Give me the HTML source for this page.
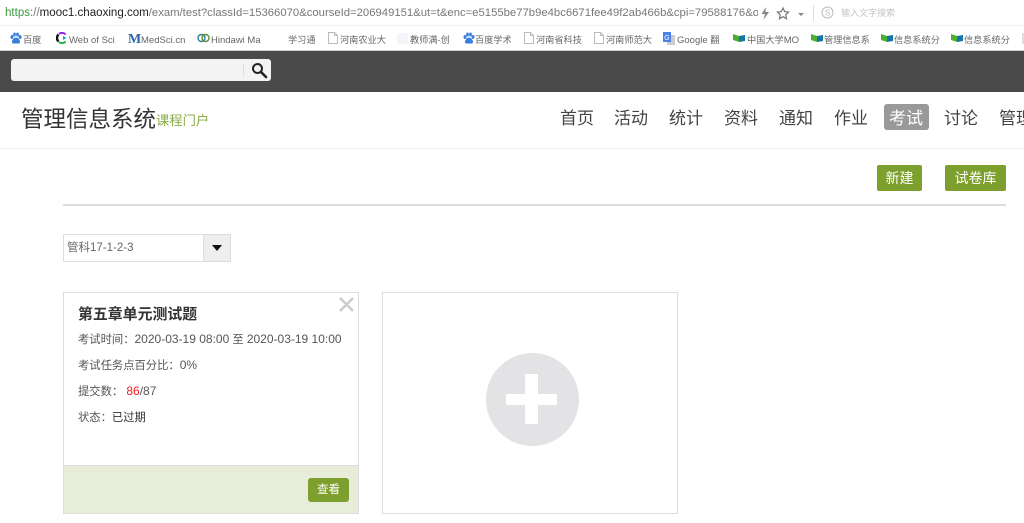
<!DOCTYPE html>
<html lang="zh-CN">
<head>
<meta charset="utf-8">
<title>管理信息系统</title>
<style>
html,body{margin:0;padding:0;width:1024px;height:523px;overflow:hidden;background:#fff;}
body{position:relative;font-family:"Liberation Sans","Noto Sans CJK SC",sans-serif;color:#333;}
.a{position:absolute;white-space:nowrap;}
.bm{position:absolute;top:32px;font-size:9.2px;line-height:16px;color:#666;white-space:nowrap;}
.bm b{font-weight:normal;font-size:9.5px;}
.ic{position:absolute;top:32px;}
.nav{position:absolute;top:107px;font-size:17px;line-height:24px;color:#444;white-space:nowrap;}
.row{position:absolute;left:78px;font-size:11.3px;line-height:16px;color:#555;white-space:nowrap;}
.row b{font-weight:normal;font-size:12px;}
.soft{filter:blur(.35px);}
</style>
</head>
<body>
<!-- address bar -->
<div class="a soft" style="left:5px;top:5px;font-size:11.55px;line-height:16px;color:#777;width:753px;overflow:hidden;"><span style="color:#3a9a3a">https</span>://<span style="color:#222">mooc1.chaoxing.com</span><span style="font-size:11.3px">/exam/test?classId=15366070&amp;courseId=206949151&amp;ut=t&amp;enc=e5155be77b9e4bc6671fee49f2ab466b&amp;cpi=79588176&amp;o</span></div>
<svg class="a" style="left:760px;top:6px" width="50" height="15" viewBox="0 0 50 15">
<path d="M6 1L1.5 8H5L3.5 14L9 6H5.5Z" fill="#888"/>
<path d="M23 2l1.7 3.6 3.9.5-2.9 2.7.8 3.900-3.500-2-3.500 2 .8-3.900-2.900-2.700 3.900-.5z" fill="none" stroke="#777" stroke-width="1.2"/>
<path d="M38 7h6l-3 3z" fill="#888"/>
</svg>
<div class="a" style="left:813px;top:5px;width:1px;height:16px;background:#ddd"></div>
<svg class="a" style="left:821px;top:6px" width="13" height="13" viewBox="0 0 13 13"><circle cx="6.5" cy="6.5" r="5.5" fill="none" stroke="#bbb"/><text x="6.5" y="9.5" font-size="8" text-anchor="middle" fill="#bbb" font-family="Liberation Sans">S</text></svg>
<div class="a soft" style="left:841px;top:6px;font-size:9px;line-height:14px;color:#c4c4c4">输入文字搜索</div>
<div class="a" style="left:0;top:25px;width:1024px;height:1px;background:#f0f0f0"></div>

<!-- bookmarks -->
<svg class="ic" style="left:10px" width="12" height="13" viewBox="0 0 12 13"><g fill="#3a7fe0"><ellipse cx="2" cy="5" rx="1.5" ry="2"/><ellipse cx="4.5" cy="2.5" rx="1.4" ry="2"/><ellipse cx="7.5" cy="2.5" rx="1.4" ry="2"/><ellipse cx="10" cy="5" rx="1.5" ry="2"/><path d="M6 5.500c2 0 4.500 3 4 5-.5 1.500-3 1-4 1s-3.500.5-4-1c-.5-2 2-5 4-5z"/></g></svg>
<div class="bm soft" style="left:23px">百度</div>
<svg class="ic" style="left:56px;top:32px" width="12" height="12" viewBox="0 0 12 12"><path d="M9.500 2.500A4.500 4.500 0 0 0 3 2" fill="none" stroke="#8a2be2" stroke-width="2"/><path d="M2.500 2.500A4.800 4.800 0 0 0 2.500 9.500" fill="none" stroke="#111" stroke-width="2.400"/><path d="M3 10A4.500 4.500 0 0 0 9.500 9.500" fill="none" stroke="#22b14c" stroke-width="2"/><path d="M7 4l3.500 2-3.500 2z" fill="#00a0e0"/></svg>
<div class="bm soft" style="left:69px"><b>Web of Sci</b></div>
<div class="a soft" style="left:128px;top:31px;font:bold 14px/17px 'Liberation Serif',serif;color:#2a63ad">M</div>
<div class="bm soft" style="left:141px"><b>MedSci.cn</b></div>
<svg class="ic" style="left:197px;top:33px" width="13" height="10" viewBox="0 0 13 10"><circle cx="4.500" cy="5" r="3.500" fill="none" stroke="#2f7f9f" stroke-width="1.400"/><circle cx="8.500" cy="5" r="3.500" fill="none" stroke="#5f8f2f" stroke-width="1.400"/></svg>
<div class="bm soft" style="left:211px"><b>Hindawi Ma</b></div>
<div class="bm soft" style="left:288px">学习通</div>
<svg class="ic" style="left:328px" width="10" height="12" viewBox="0 0 10 12"><path d="M.5.500h6l3 3v8h-9zM6.500.500v3h3" fill="#fff" stroke="#bbb"/></svg>
<div class="bm soft" style="left:340px">河南农业大</div>
<div class="a" style="left:397px;top:33px;width:11px;height:11px;background:#f3f5fa"></div>
<div class="bm soft" style="left:410px">教师满-创</div>
<svg class="ic" style="left:463px" width="12" height="13" viewBox="0 0 12 13"><g fill="#3a7fe0"><ellipse cx="2" cy="5" rx="1.500" ry="2"/><ellipse cx="4.500" cy="2.500" rx="1.400" ry="2"/><ellipse cx="7.500" cy="2.500" rx="1.400" ry="2"/><ellipse cx="10" cy="5" rx="1.500" ry="2"/><path d="M6 5.500c2 0 4.500 3 4 5-.5 1.500-3 1-4 1s-3.500.5-4-1c-.5-2 2-5 4-5z"/></g></svg>
<div class="bm soft" style="left:475px">百度学术</div>
<svg class="ic" style="left:524px" width="10" height="12" viewBox="0 0 10 12"><path d="M.5.500h6l3 3v8h-9zM6.500.500v3h3" fill="#fff" stroke="#bbb"/></svg>
<div class="bm soft" style="left:536px">河南省科技</div>
<svg class="ic" style="left:594px" width="10" height="12" viewBox="0 0 10 12"><path d="M.5.500h6l3 3v8h-9zM6.500.500v3h3" fill="#fff" stroke="#bbb"/></svg>
<div class="bm soft" style="left:606px">河南师范大</div>
<svg class="ic" style="left:663px" width="12" height="13" viewBox="0 0 12 13"><rect x="4" y="3" width="8" height="10" fill="#ccc"/><rect width="8" height="10" fill="#4a80e8"/><text x="4" y="8" font-size="7" fill="#fff" text-anchor="middle" font-family="Liberation Sans">G</text></svg>
<div class="bm soft" style="left:677px"><b>Google</b> 翻</div>
<svg class="ic" style="left:733px;top:34px" width="12" height="9" viewBox="0 0 12 9"><path d="M0 0l6 2v6L0 6z" fill="#4caf30"/><path d="M12 1L6 2v6l6-1z" fill="#1476a8"/></svg>
<div class="bm soft" style="left:747px">中国大学<b>MO</b></div>
<svg class="ic" style="left:811px;top:34px" width="12" height="9" viewBox="0 0 12 9"><path d="M0 0l6 2v6L0 6z" fill="#4caf30"/><path d="M12 1L6 2v6l6-1z" fill="#1476a8"/></svg>
<div class="bm soft" style="left:824px">管理信息系</div>
<svg class="ic" style="left:881px;top:34px" width="12" height="9" viewBox="0 0 12 9"><path d="M0 0l6 2v6L0 6z" fill="#4caf30"/><path d="M12 1L6 2v6l6-1z" fill="#1476a8"/></svg>
<div class="bm soft" style="left:894px">信息系统分</div>
<svg class="ic" style="left:951px;top:34px" width="12" height="9" viewBox="0 0 12 9"><path d="M0 0l6 2v6L0 6z" fill="#4caf30"/><path d="M12 1L6 2v6l6-1z" fill="#1476a8"/></svg>
<div class="bm soft" style="left:964px">信息系统分</div>
<div class="a" style="left:1022px;top:33px;width:2px;height:11px;background:#ddd"></div>

<!-- dark bar -->
<div class="a" style="left:0;top:50px;width:1024px;height:1px;background:#ccc"></div>
<div class="a" style="left:0;top:51px;width:1024px;height:41px;background:#4a4a4a"></div>
<div class="a" style="left:11px;top:59px;width:260px;height:22px;background:#f3f3f3;border-radius:3px"></div>
<div class="a" style="left:243px;top:64px;width:1px;height:12px;background:#ddd"></div>
<svg class="a" style="left:251px;top:61px" width="18" height="18" viewBox="0 0 18 18"><circle cx="6.500" cy="7.500" r="4.500" fill="none" stroke="#222" stroke-width="2"/><path d="M10 11l5 5" stroke="#222" stroke-width="2.600" stroke-linecap="round"/></svg>

<!-- course header -->
<div class="a soft" style="left:21px;top:105px;font-size:22.500px;line-height:30px;color:#333">管理信息系统</div>
<div class="a soft" style="left:156px;top:111px;font-size:13.300px;line-height:20px;color:#8aab4a">课程门户</div>
<div class="nav soft" style="left:560px">首页</div>
<div class="nav soft" style="left:614px">活动</div>
<div class="nav soft" style="left:669px">统计</div>
<div class="nav soft" style="left:724px">资料</div>
<div class="nav soft" style="left:779px">通知</div>
<div class="nav soft" style="left:834px">作业</div>
<div class="a" style="left:884px;top:104px;width:45px;height:26px;background:#999;border-radius:3px"></div>
<div class="nav soft" style="left:889px;color:#fff">考试</div>
<div class="nav soft" style="left:944px">讨论</div>
<div class="nav soft" style="left:999px">管理</div>
<div class="a" style="left:0;top:148px;width:1024px;height:1px;background:#eee"></div>

<!-- action buttons -->
<div class="a" style="left:877px;top:165px;width:45px;height:26px;background:#7c9f2d;border-radius:2px"></div>
<div class="a soft" style="left:877px;top:165px;width:45px;line-height:26px;color:#fff;font-size:14px;text-align:center">新建</div>
<div class="a" style="left:945px;top:165px;width:61px;height:26px;background:#7c9f2d;border-radius:2px"></div>
<div class="a soft" style="left:945px;top:165px;width:61px;line-height:26px;color:#fff;font-size:14px;text-align:center">试卷库</div>
<div class="a" style="left:63px;top:204px;width:943px;height:2px;background:#ddd"></div>

<!-- select -->
<div class="a" style="left:63px;top:234px;width:166px;height:26px;border:1px solid #ddd;background:#fff"></div>
<div class="a soft" style="left:67px;top:240px;font-size:11.500px;line-height:17px;color:#666">管科17-1-2-3</div>
<div class="a" style="left:203px;top:235px;width:27px;height:26px;background:#eee;border-left:1px solid #ddd;box-sizing:border-box"></div>
<div class="a" style="left:212px;top:245px;width:0;height:0;border-left:5.500px solid transparent;border-right:5.500px solid transparent;border-top:6px solid #111"></div>

<!-- card 1 -->
<div class="a" style="left:63px;top:292px;width:294px;height:220px;border:1px solid #ddd;background:#fff"></div>
<svg class="a" style="left:338px;top:296px" width="17" height="17" viewBox="0 0 17 17"><path d="M2 2l13 13M15 2L2 15" stroke="#ccc" stroke-width="2.600"/></svg>
<div class="a soft" style="left:78px;top:305px;font-size:14.900px;line-height:21px;font-weight:bold;color:#333">第五章单元测试题</div>
<div class="row soft" style="top:331px">考试时间：<b>2020-03-19 08:00</b> 至 <b>2020-03-19 10:00</b></div>
<div class="row soft" style="top:357px">考试任务点百分比：<b>0%</b></div>
<div class="row soft" style="top:383px">提交数： <b style="color:#f02020">86</b><b>/87</b></div>
<div class="row soft" style="top:410px">状态：<span style="color:#333">已过期</span></div>
<div class="a" style="left:64px;top:465px;width:294px;height:48px;background:#e8edda;border-top:1px solid #ddd;box-sizing:border-box"></div>
<div class="a" style="left:308px;top:478px;width:41px;height:24px;background:#7c9f2d;border-radius:3px"></div>
<div class="a soft" style="left:308px;top:478px;width:41px;line-height:24px;color:#fff;font-size:11.500px;text-align:center">查看</div>

<!-- card 2 -->
<div class="a" style="left:382px;top:292px;width:294px;height:220px;border:1px solid #ddd;background:#fff"></div>
<div class="a" style="left:486px;top:353px;width:93px;height:93px;border-radius:50%;background:#e3e3e5"></div>
<div class="a" style="left:506px;top:394px;width:51px;height:11px;background:#fff"></div>
<div class="a" style="left:525px;top:374px;width:13px;height:50px;background:#fff"></div>
</body>
</html>
